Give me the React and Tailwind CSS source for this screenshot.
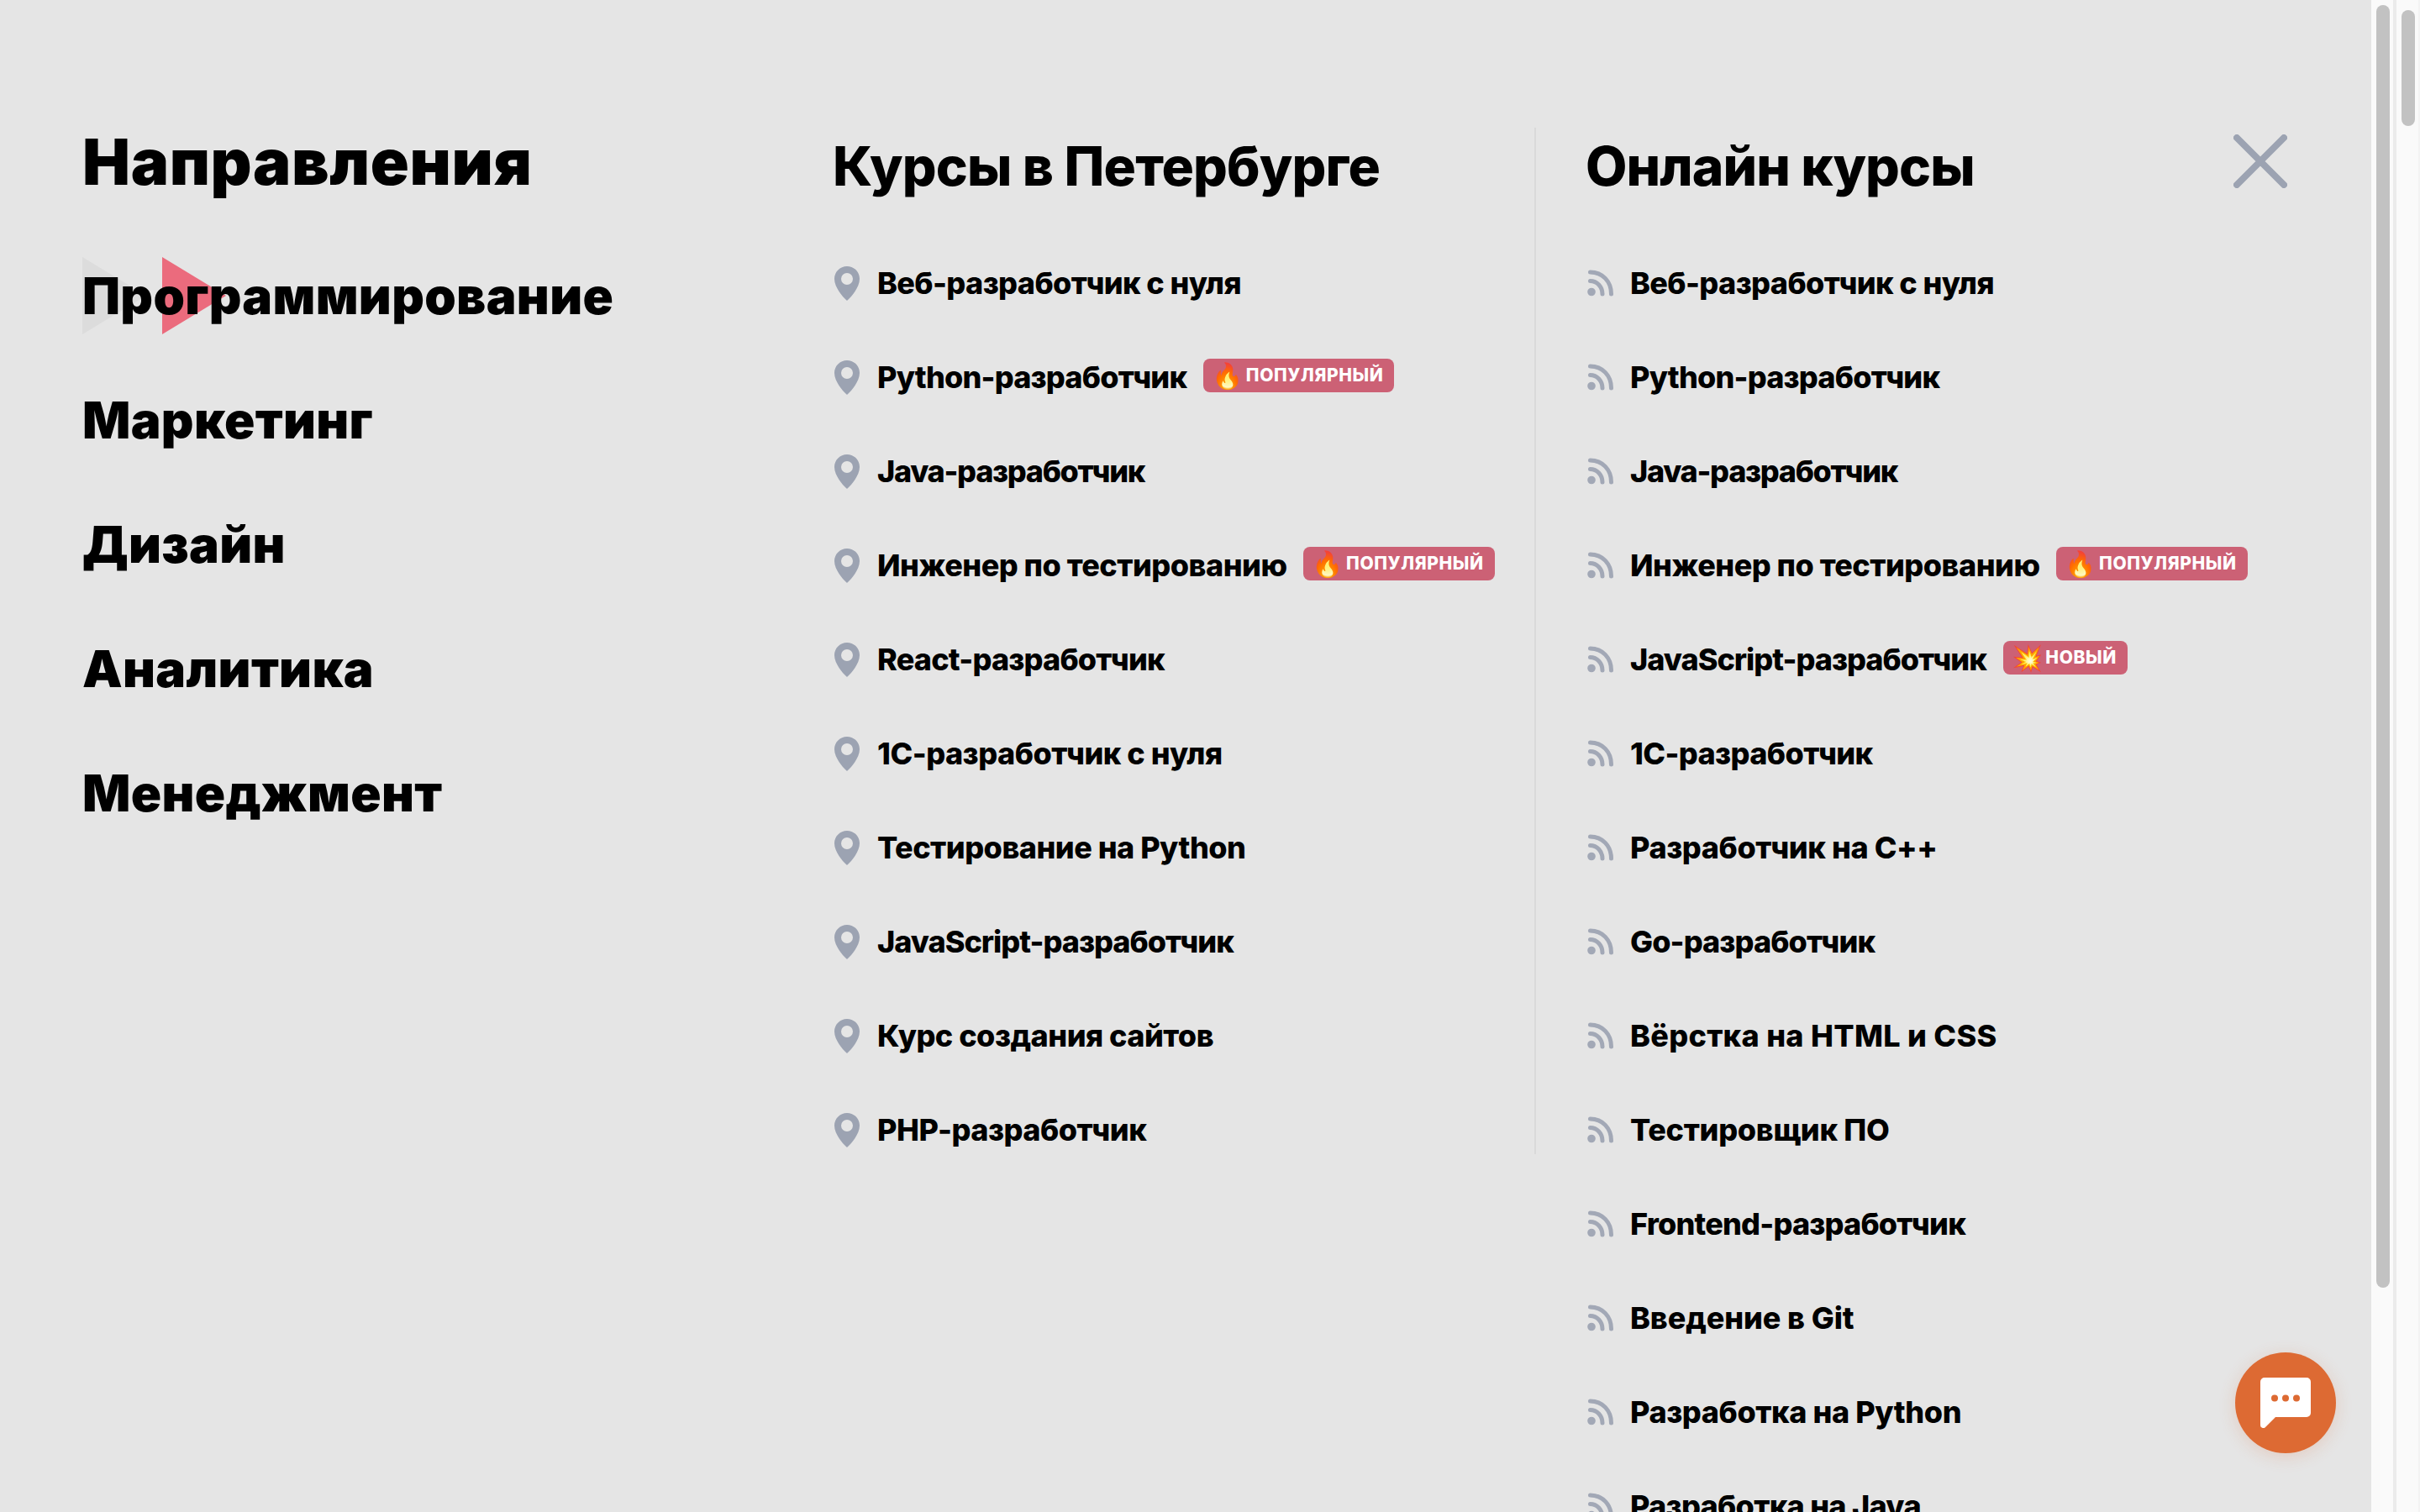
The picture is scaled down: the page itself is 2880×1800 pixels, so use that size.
const font = { fontFamily: 'Inter, sans-serif' };

const Pin = () => (
  <svg viewBox="0 0 30 41" className="w-[30px] h-[41px] shrink-0 text-[#9ca3b2]" fill="currentColor">
    <path fillRule="evenodd" d="M15 0C6.700 0 0 6.700 0 15c0 5.500 2.800 10.500 5.500 15C8.300 34.300 11.500 38 15 41c3.500-3 6.700-6.700 9.500-11C27.200 25.500 30 20.500 30 15 30 6.700 23.300 0 15 0Zm0 8a7 7 0 1 1 0 14 7 7 0 0 1 0-14Z" />
  </svg>
);

const Rss = () => (
  <svg viewBox="0 0 32 32" className="w-[32px] h-[32px] shrink-0 text-[#a2a8b6]" fill="none" stroke="currentColor" strokeWidth="5" strokeLinecap="round">
    <circle cx="5" cy="26.500" r="4.800" fill="currentColor" stroke="none" />
    <path d="M3.500 13.500c8 0 14.500 7 14.500 15.500" />
    <path d="M3.500 3C18 3 28.500 14 28.500 29" />
  </svg>
);

const Badge = ({ icon, text }) => (
  <span className="inline-flex items-center ml-[20px] h-[40px] rounded-[8px] bg-[#cc6175] text-white font-extrabold uppercase text-[21px] tracking-[0.6px] pl-[10px] pr-[13px] -translate-y-[2px]">
    <span className="text-[30px] mr-[3px] leading-none">{icon}</span>
    {text}
  </span>
);

const pop = { icon: '🔥', text: 'популярный' };
const nw = { icon: '💥', text: 'новый' };

const spb = [
  ['Веб-разработчик с нуля', null, 'tracking-[-0.6px]'],
  ['Python-разработчик', pop, 'tracking-[-0.8px]'],
  ['Java-разработчик', null, 'tracking-[-1.3px]'],
  ['Инженер по тестированию', pop],
  ['React-разработчик', null, 'tracking-[-0.8px]'],
  ['1С-разработчик с нуля'],
  ['Тестирование на Python'],
  ['JavaScript-разработчик', null, 'tracking-[-1px]'],
  ['Курс создания сайтов'],
  ['PHP-разработчик'],
];

const online = [
  ['Веб-разработчик с нуля', null, 'tracking-[-0.6px]'],
  ['Python-разработчик', null, 'tracking-[-0.8px]'],
  ['Java-разработчик', null, 'tracking-[-1.3px]'],
  ['Инженер по тестированию', pop],
  ['JavaScript-разработчик', nw, 'tracking-[-1px]'],
  ['1С-разработчик', null, 'tracking-[-0.6px]'],
  ['Разработчик на C++', null, 'tracking-[-0.4px]'],
  ['Go-разработчик', null, 'tracking-[-0.9px]'],
  ['Вёрстка на HTML и CSS', null, 'tracking-[0.3px]'],
  ['Тестировщик ПО', null, 'tracking-[-0.3px]'],
  ['Frontend-разработчик', null, 'tracking-[-0.8px]'],
  ['Введение в Git', null, 'tracking-[-0.1px]'],
  ['Разработка на Python', null, 'tracking-[-0.4px]'],
  ['Разработка на Java', null, 'tracking-[-0.7px]'],
];

const Row = ({ icon, label, badge, track }) => (
  <li className="flex items-center h-[112px] shrink-0 whitespace-nowrap">
    <span className="w-[53px] flex shrink-0 pl-[2px]">{icon}</span>
    <span className={`text-[36px] font-extrabold text-black ${track || 'tracking-[-0.5px]'}`}>{label}</span>
    {badge && <Badge {...badge} />}
  </li>
);

export default function App() {
  return (
    <div className="relative flex w-[2880px] h-[1800px] overflow-hidden bg-[#fafafa]" style={font}>
      <main className="relative w-[2822px] h-[1800px] shrink-0 bg-[#e5e5e5] flex pl-[98px] pt-[152px] overflow-hidden">
        <section className="w-[893px] shrink-0">
          <h2 className="text-[76px] leading-[80px] font-black text-black tracking-[0.65px]">Направления</h2>
          <ul className="mt-[46px] relative">
            {['Программирование', 'Маркетинг', 'Дизайн', 'Аналитика', 'Менеджмент'].map((t) => (
              <li key={t} className="relative h-[148px] flex items-center text-[60px] font-black text-black tracking-[0.35px] whitespace-nowrap">
                {t === 'Программирование' && (
                  <>
                    <svg className="absolute left-0 top-[28px] w-[76px] h-[92px]" viewBox="0 0 76 92"><path d="M0 0 76 46 0 92Z" fill="#dcdcdc" /></svg>
                    <svg className="absolute left-[95px] top-[28px] w-[76px] h-[92px]" viewBox="0 0 76 92"><path d="M0 0 76 46 0 92Z" fill="#eb6b7d" /></svg>
                  </>
                )}
                <span className="relative">{t}</span>
              </li>
            ))}
          </ul>
        </section>
        <section className="w-[837px] shrink-0 h-[1222px] border-r-2 border-[#d9d9d9]">
          <h2 className="text-[64px] leading-[80px] font-extrabold tracking-[-0.8px] text-black mt-[6px]">Курсы в Петербурге</h2>
          <ul className="mt-[43px]">
            {spb.map(([l, b, t]) => <Row key={l} icon={<Pin />} label={l} badge={b} track={t} />)}
          </ul>
        </section>
        <section className="pl-[59px] flex-1">
          <h2 className="text-[64px] leading-[80px] font-extrabold tracking-[-0.9px] text-black mt-[6px]">Онлайн курсы</h2>
          <ul className="mt-[43px]">
            {online.map(([l, b, t]) => <Row key={l} icon={<Rss />} label={l} badge={b} track={t} />)}
          </ul>
        </section>
        <svg className="absolute left-[2658px] top-[160px] w-[64px] h-[64px] text-[#9ca3b2]" viewBox="0 0 64 64" fill="none" stroke="currentColor" strokeWidth="8" strokeLinecap="round">
          <path d="M4 4l56 56M60 4 4 60" />
        </svg>
        <button className="absolute left-[2660px] top-[1610px] w-[120px] h-[120px] rounded-full bg-[#dd6a33] shadow-[0_4px_20px_rgba(221,106,51,0.2)] flex items-center justify-center">
          <svg viewBox="0 0 60 60" className="w-[60px] h-[60px]">
            <path d="M5 0h50a5 5 0 0 1 5 5v37a5 5 0 0 1-5 5H18L6 59a3.500 3.500 0 0 1-6-2.500V5a5 5 0 0 1 5-5Z" fill="#fff" />
            <circle cx="17" cy="24.500" r="4" fill="#dd6a33" />
            <circle cx="30" cy="24.500" r="4" fill="#dd6a33" />
            <circle cx="43" cy="24.500" r="4" fill="#dd6a33" />
          </svg>
        </button>
      </main>
      <div className="w-[26px] h-full shrink-0 bg-[#fafafa] px-[6px] pt-[6px]">
        <div className="w-[16px] h-[1527px] rounded-full bg-[#c2c2c2]" />
      </div>
      <div className="w-[4px] h-full shrink-0 bg-[#ebebeb]" />
      <div className="w-[28px] h-full shrink-0 bg-[#fafafa] border-r-2 border-[#f3f3f3] pl-[6px] pt-[12px]">
        <div className="w-[16px] h-[138px] rounded-full bg-[#c2c2c2]" />
      </div>
    </div>
  );
}
